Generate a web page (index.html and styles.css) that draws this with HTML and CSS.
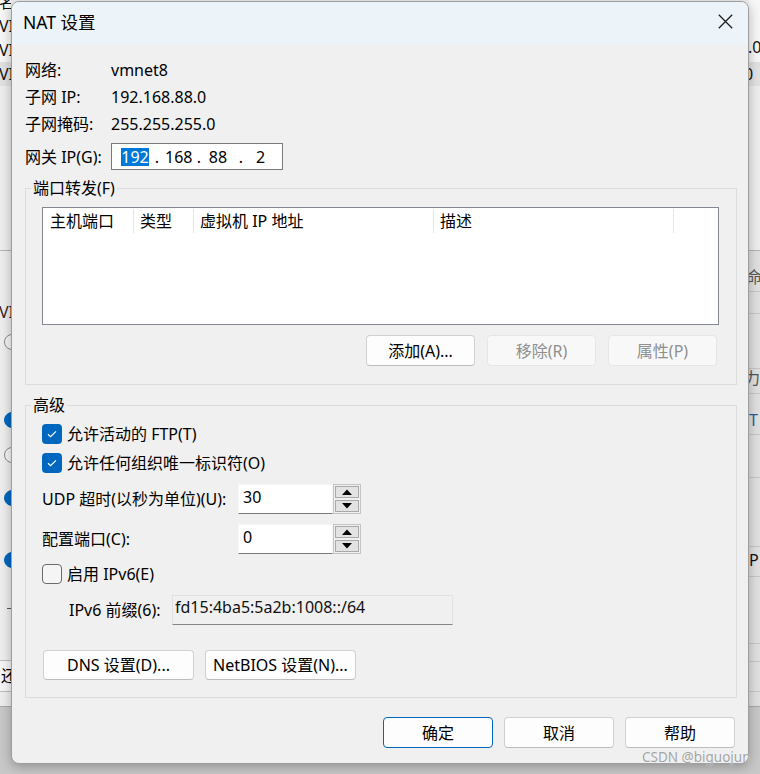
FILE: index.html
```html
<!DOCTYPE html>
<html lang="zh-CN">
<head>
<meta charset="utf-8">
<title>NAT 设置</title>
<link rel="stylesheet" href="styles.css">
</head>
<body>
<div class="desktop">
  <div class="bgwin">
    <div class="strip left">
      <div class="bg-list">
        <div class="bg-row"><span class="bg-name">名</span></div>
        <div class="bg-row"><span class="bg-name">VI</span></div>
        <div class="bg-row"><span class="bg-name">VI</span></div>
        <div class="bg-row sel"><span class="bg-name">VI</span></div>
      </div>
      <div class="bg-sep s250"></div>
      <span class="bg-txt t-vi">VI</span>
      <span class="bg-radio" style="top:334px"></span>
      <span class="bg-radio on" style="top:412px"></span>
      <span class="bg-radio" style="top:447px"></span>
      <span class="bg-radio on" style="top:490px"></span>
      <span class="bg-radio on" style="top:552px"></span>
      <span class="bg-dash"></span>
      <span class="bg-btn">还</span>
    </div>
    <div class="strip right">
      <div class="bg-list">
        <div class="bg-row"></div>
        <div class="bg-row"></div>
        <div class="bg-row"><span class="bg-val v2">.0</span></div>
        <div class="bg-row sel"><span class="bg-val v3">0</span></div>
      </div>
      <div class="bg-sep s250"></div>
      <div class="bg-table">
        <div class="bg-tline" style="top:40px"></div>
        <div class="bg-tline" style="top:62px"></div>
        <div class="bg-tline" style="top:117px"></div>
        <div class="bg-tline" style="top:142px"></div>
        <div class="bg-tline" style="top:183px"></div>
        <div class="bg-tline" style="top:226px"></div>
        <div class="bg-tline" style="top:295px"></div>
        <div class="bg-tline" style="top:325px"></div>
        <div class="bg-tline" style="top:392px"></div>
        <div class="bg-tline" style="top:410px"></div>
        <div class="bg-tline" style="top:440px"></div>
      </div>
      <span class="bg-txt t-ming">命</span>
      <span class="bg-txt t-dong">力</span>
      <span class="bg-txt t-t">T</span>
      <span class="bg-txt t-p">P</span>
    </div>
  </div>

  <div class="dialog">
    <div class="titlebar">
      <div class="title">NAT 设置</div>
      <div class="close">
        <svg width="15" height="15" viewBox="0 0 15 15"><path d="M0.8 0.8 L14.2 14.2 M14.2 0.8 L0.8 14.2" stroke="#1b1b1b" stroke-width="1.25" fill="none"/></svg>
      </div>
    </div>

    <div class="content">
      <div class="info">
        <div class="info-row"><span class="lbl">网络:</span><span>vmnet8</span></div>
        <div class="info-row"><span class="lbl">子网 IP:</span><span>192.168.88.0</span></div>
        <div class="info-row r3"><span class="lbl">子网掩码:</span><span>255.255.255.0</span></div>
        <div class="ip-row">
          <span class="lbl">网关 IP(G):</span>
          <div class="ipbox">
            <span class="seg sel w28">192</span><span class="seg w16">.</span><span class="seg w26">168</span><span class="seg w16">.</span><span class="seg w22">88</span><span class="seg w24">.</span><span class="seg w15">2</span>
          </div>
        </div>
      </div>

      <fieldset class="group g1">
        <legend>端口转发(F)</legend>
        <div class="gbody g1body">
          <div class="listview">
            <div class="lv-head">
              <span class="lv-col c1">主机端口</span>
              <span class="lv-col c2">类型</span>
              <span class="lv-col c3">虚拟机 IP 地址</span>
              <span class="lv-col c4">描述</span>
            </div>
          </div>
          <div class="btnrow">
            <button class="btn">添加(A)...</button>
            <button class="btn dis">移除(R)</button>
            <button class="btn dis">属性(P)</button>
          </div>
        </div>
      </fieldset>

      <fieldset class="group g2">
        <legend>高级</legend>
        <div class="gbody g2body">
          <div class="cbrow">
            <span class="cb"><svg width="12" height="10" viewBox="0 0 12 10"><path d="M2 5.2 L4.6 7.6 L10 2.4" stroke="#fff" stroke-width="1.2" fill="none"/></svg></span>
            <span class="cblbl">允许活动的 FTP(T)</span>
          </div>
          <div class="cbrow">
            <span class="cb"><svg width="12" height="10" viewBox="0 0 12 10"><path d="M2 5.2 L4.6 7.6 L10 2.4" stroke="#fff" stroke-width="1.2" fill="none"/></svg></span>
            <span class="cblbl">允许任何组织唯一标识符(O)</span>
          </div>
          <div class="spinrow udp">
            <span class="spinlbl">UDP 超时(以秒为单位)(U):</span>
            <div class="spin-input">30</div>
            <div class="spinbtns">
              <span class="sbtn"><svg width="10" height="6" viewBox="0 0 10 6"><path d="M0 6 L5 0.5 L10 6 Z" fill="#000"/></svg></span>
              <span class="sbtn"><svg width="10" height="6" viewBox="0 0 10 6"><path d="M0 0 L10 0 L5 5.5 Z" fill="#000"/></svg></span>
            </div>
          </div>
          <div class="spinrow cfg">
            <span class="spinlbl">配置端口(C):</span>
            <div class="spin-input">0</div>
            <div class="spinbtns">
              <span class="sbtn"><svg width="10" height="6" viewBox="0 0 10 6"><path d="M0 6 L5 0.5 L10 6 Z" fill="#000"/></svg></span>
              <span class="sbtn"><svg width="10" height="6" viewBox="0 0 10 6"><path d="M0 0 L10 0 L5 5.5 Z" fill="#000"/></svg></span>
            </div>
          </div>
          <div class="cbrow cb3">
            <span class="cb off"></span>
            <span class="cblbl">启用 IPv6(E)</span>
          </div>
          <div class="v6row">
            <span class="v6lbl">IPv6 前缀(6):</span>
            <div class="v6field">fd15:4ba5:5a2b:1008::/64</div>
          </div>
          <div class="dnsrow">
            <button class="btn wide">DNS 设置(D)...</button>
            <button class="btn wide">NetBIOS 设置(N)...</button>
          </div>
        </div>
      </fieldset>

      <div class="footer">
        <button class="btn fbtn def">确定</button>
        <button class="btn fbtn">取消</button>
        <button class="btn fbtn">帮助</button>
      </div>
    </div>
  </div>

  <div class="watermark">CSDN @biguojun</div>
</div>
</body>
</html>
```

FILE: styles.css
```css
* { box-sizing: border-box; }
html, body { margin: 0; padding: 0; }
body {
  width: 760px;
  height: 774px;
  overflow: hidden;
  font-family: "Noto Sans", "Noto Sans CJK SC", sans-serif;
  font-size: 16px;
  color: #000;
  background: #c6c6c6;
}
.desktop {
  position: relative;
  width: 760px;
  height: 774px;
  overflow: hidden;
  background: #c8c8c8;
}

/* background window (only thin strips visible) */
.bgwin {
  position: absolute;
  left: 0;
  top: 0;
  width: 760px;
  height: 707px;
  background: #eeeeee;
  border-bottom: 1px solid #a9a9a9;
}
.strip {
  position: absolute;
  top: 0;
  height: 707px;
  overflow: hidden;
}
.strip.left { left: 0; width: 11px; }
.strip.right { left: 749px; width: 11px; }
.bg-list {
  position: absolute;
  left: 0;
  top: -10px;
  width: 100%;
  background: #f7f7f7;
}
.bg-row {
  position: relative;
  height: 24px;
  line-height: 24px;
  white-space: nowrap;
  color: #111;
}
.bg-row.sel { background: #e2e2e2; }
.bg-name { position: absolute; left: -1px; }
.bg-val { position: absolute; }
.bg-val.v2 { left: -1px; top: -3px; }
.bg-val.v3 { left: -5px; }
.bg-sep {
  position: absolute;
  left: 0;
  width: 100%;
  height: 1px;
  background: #b4b4b4;
}
.s250 { top: 250px; }
.bg-table {
  position: absolute;
  left: 0;
  top: 251px;
  width: 11px;
  height: 455px;
  background: #e0e0e0;
}
.bg-tline {
  position: absolute;
  left: 0;
  width: 11px;
  height: 1px;
  background: #c6c6c6;
}
.bg-txt { position: absolute; white-space: nowrap; line-height: 20px; }
.t-vi { left: -1px; top: 302px; color: #3a1c1c; }
.t-ming { left: -3px; top: 267px; color: #555; }
.t-dong { left: -5px; top: 368px; color: #555; }
.t-t { left: 0; top: 410px; color: #2c5d9a; }
.t-p { left: 0; top: 550px; color: #111; }
.bg-radio {
  position: absolute;
  left: 4px;
  width: 16px;
  height: 16px;
  border-radius: 50%;
  border: 1px solid #8a8a8a;
  background: #f6f6f6;
}
.bg-radio.on { background: #0067c0; border-color: #0067c0; }
.bg-dash {
  position: absolute;
  left: 7px;
  top: 608px;
  width: 4px;
  height: 1px;
  background: #555;
}
.bg-btn {
  position: absolute;
  left: -4px;
  top: 660px;
  width: 20px;
  height: 32px;
  padding-left: 4px;
  line-height: 30px;
  border: 1px solid #bdbdbd;
  background: #f6f6f6;
  white-space: nowrap;
}

/* dialog */
.dialog {
  position: absolute;
  left: 11px;
  top: 1px;
  width: 738px;
  height: 763px;
  background: #f0f0f0;
  border: 1px solid #9e9e9e;
  border-radius: 8px;
  overflow: hidden;
  box-shadow: 0 3px 12px rgba(0, 0, 0, 0.28);
  display: flex;
  flex-direction: column;
}
.titlebar {
  flex: none;
  height: 43px;
  padding: 0 0 4px 11px;
  display: flex;
  align-items: center;
  background: #edf4f9;
}
.title {
  flex: 1;
  font-size: 17.5px;
  line-height: 24px;
  color: #000;
}
.close {
  width: 46px;
  height: 39px;
  display: flex;
  align-items: center;
  justify-content: center;
}
.close svg { display: block; }

.content {
  flex: 1;
  padding: 0 11px 0 13px;
  display: flex;
  flex-direction: column;
}

.info { padding-top: 11px; }
.info-row {
  display: flex;
  align-items: center;
  height: 27px;
  line-height: 22px;
  white-space: nowrap;
}
.info-row.r3 { height: 28px; }
.lbl { width: 86px; flex: none; }
.ip-row {
  margin-top: 5px;
  height: 27px;
  line-height: 22px;
  display: flex;
  align-items: center;
}
.ipbox {
  width: 172px;
  height: 27px;
  background: #fff;
  border: 1px solid #7a7a7a;
  padding-left: 9px;
  display: flex;
  align-items: center;
}
.seg {
  display: inline-block;
  text-align: center;
  height: 18px;
  line-height: 18px;
  flex: none;
}
.seg.sel { background: #0078d7; color: #fff; }
.w28 { width: 28px; }
.w26 { width: 26px; }
.w24 { width: 24px; }
.w22 { width: 22px; }
.w16 { width: 16px; }
.w15 { width: 15px; }

/* groups */
.group {
  border: 1px solid #dcdcdc;
  margin: 0;
  padding: 0;
  min-width: 0;
}
.group legend {
  margin-left: 5px;
  padding: 0 2px;
  line-height: 20px;
  font-size: 16px;
}
.g1 { margin-top: 8px; }
.g1body { padding: 9px 17px 18px 16px; }
.g2 { margin-top: 10px; }
.g2body { padding: 4px 11px 17px 16px; }

.listview {
  height: 118px;
  background: #fff;
  border: 1px solid #828790;
}
.lv-head { display: flex; height: 26px; }
.lv-col {
  display: block;
  margin: 1px 0;
  height: 24px;
  line-height: 24px;
  padding-left: 6px;
  border-right: 1px solid #e5e5e5;
  white-space: nowrap;
}
.lv-col.c1 { width: 91px; padding-left: 7px; }
.lv-col.c2 { width: 60px; }
.lv-col.c3 { width: 240px; }
.lv-col.c4 { width: 240px; }

.btnrow {
  display: flex;
  justify-content: flex-end;
  gap: 12px;
  margin-top: 10px;
  padding-right: 2px;
}
.btn {
  font: inherit;
  color: #000;
  width: 109px;
  height: 31px;
  margin: 0;
  padding: 0;
  background: #fdfdfd;
  border: 1px solid #d0d0d0;
  border-bottom-color: #bdbdbd;
  border-radius: 4px;
  display: flex;
  align-items: center;
  justify-content: center;
  line-height: 20px;
  white-space: nowrap;
}
.btn.dis {
  background: #f8f8f8;
  border-color: #e6e6e6;
  color: #8f8f8f;
}
.btn.wide { width: 151px; height: 30px; }

/* advanced */
.cbrow {
  display: flex;
  align-items: center;
  height: 29px;
  line-height: 22px;
}
.cb {
  width: 20px;
  height: 20px;
  flex: none;
  border-radius: 4px;
  background: #0067c0;
  display: flex;
  align-items: center;
  justify-content: center;
}
.cb svg { display: block; }
.cb.off {
  background: #f5f5f5;
  border: 1px solid #6b6b6b;
}
.cblbl { margin-left: 5px; white-space: nowrap; }
.cb3 { margin-top: 5px; }

.spinrow {
  display: flex;
  align-items: center;
  height: 30px;
  line-height: 22px;
}
.spinrow.udp { margin-top: 7px; }
.spinrow.cfg { margin-top: 10px; }
.spinlbl { width: 196px; flex: none; white-space: nowrap; }
.spin-input {
  width: 95px;
  height: 30px;
  background: #fff;
  border: 1px solid #f7f7f7;
  border-bottom-color: #7a7a7a;
  padding: 1px 0 0 4px;
  line-height: 22px;
}
.spinbtns {
  width: 28px;
  height: 30px;
  border: 1px solid #c4c4c4;
  padding: 1px;
  display: flex;
  flex-direction: column;
  gap: 2px;
}
.sbtn {
  flex: 1;
  background: #e3e3e3;
  border: 1px solid #a9a9a9;
  display: flex;
  align-items: center;
  justify-content: center;
}
.sbtn svg { display: block; }

.v6row {
  margin-top: 7px;
  height: 30px;
  line-height: 22px;
  display: flex;
  align-items: center;
}
.v6lbl { margin-left: 27px; width: 103px; flex: none; white-space: nowrap; }
.v6field {
  width: 281px;
  height: 30px;
  background: #f0f0f0;
  border: 1px solid #e2e2e2;
  border-bottom-color: #868686;
  padding: 0 0 0 2px;
  line-height: 22px;
  color: #111;
  white-space: nowrap;
}

.dnsrow {
  margin-top: 25px;
  display: flex;
  gap: 11px;
  padding-left: 1px;
}

.footer {
  margin-top: 19px;
  display: flex;
  justify-content: flex-end;
  gap: 11px;
  padding-right: 2px;
}
.btn.fbtn { width: 110px; }
.btn.def { border-color: #0067c0; }

.watermark {
  position: absolute;
  left: 642px;
  top: 747px;
  font-family: "Noto Sans", sans-serif;
  font-size: 13.5px;
  line-height: 20px;
  color: #a3a3a3;
  text-shadow: 0 0 1px #fff;
  white-space: nowrap;
}
```
